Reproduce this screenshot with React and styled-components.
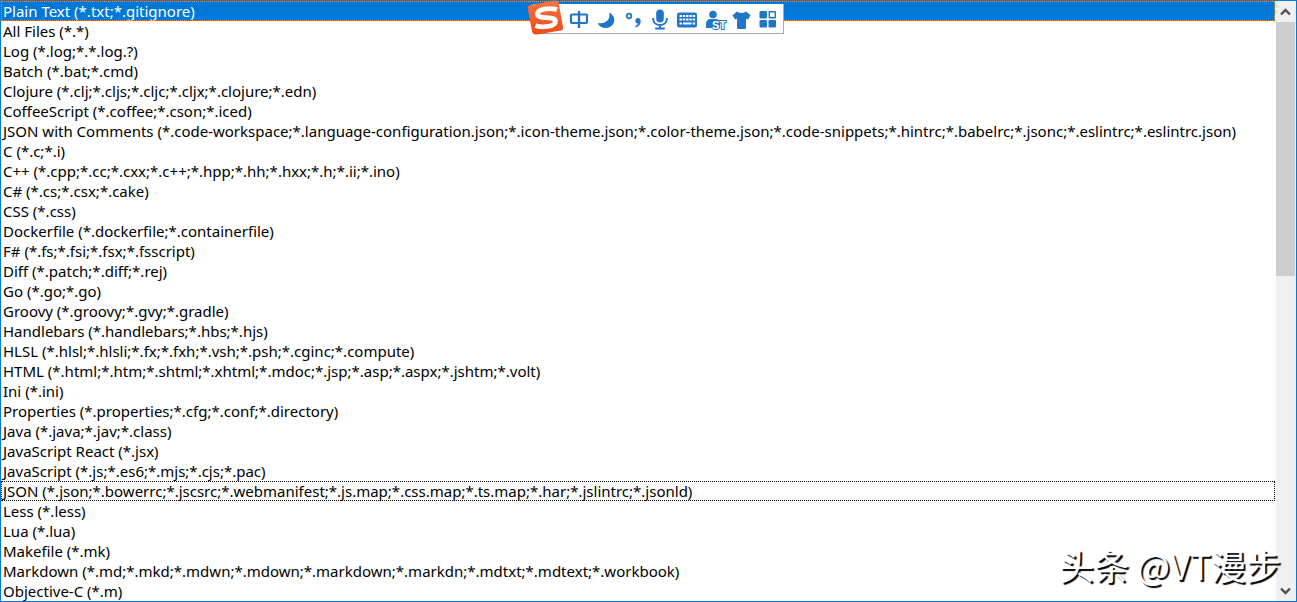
import React, { useState } from 'react';
import styled, { createGlobalStyle } from 'styled-components'

const GlobalStyle = createGlobalStyle`
  body {
    margin: 0;
    background-color: white;
  }
`

const fileTypes = [
  "Plain Text (*.txt;*.gitignore)",
  "All Files (*.*)",
  "Log (*.log;*.*.log.?)",
  "Batch (*.bat;*.cmd)",
  "Clojure (*.clj;*.cljs;*.cljc;*.cljx;*.clojure;*.edn)",
  "CoffeeScript (*.coffee;*.cson;*.iced)",
  "JSON with Comments (*.code-workspace;*.language-configuration.json;*.icon-theme.json;*.color-theme.json;*.code-snippets;*.hintrc;*.babelrc;*.jsonc;*.eslintrc;*.eslintrc.json)",
  "C (*.c;*.i)",
  "C++ (*.cpp;*.cc;*.cxx;*.c++;*.hpp;*.hh;*.hxx;*.h;*.ii;*.ino)",
  "C# (*.cs;*.csx;*.cake)",
  "CSS (*.css)",
  "Dockerfile (*.dockerfile;*.containerfile)",
  "F# (*.fs;*.fsi;*.fsx;*.fsscript)",
  "Diff (*.patch;*.diff;*.rej)",
  "Go (*.go;*.go)",
  "Groovy (*.groovy;*.gvy;*.gradle)",
  "Handlebars (*.handlebars;*.hbs;*.hjs)",
  "HLSL (*.hlsl;*.hlsli;*.fx;*.fxh;*.vsh;*.psh;*.cginc;*.compute)",
  "HTML (*.html;*.htm;*.shtml;*.xhtml;*.mdoc;*.jsp;*.asp;*.aspx;*.jshtm;*.volt)",
  "Ini (*.ini)",
  "Properties (*.properties;*.cfg;*.conf;*.directory)",
  "Java (*.java;*.jav;*.class)",
  "JavaScript React (*.jsx)",
  "JavaScript (*.js;*.es6;*.mjs;*.cjs;*.pac)",
  "JSON (*.json;*.bowerrc;*.jscsrc;*.webmanifest;*.js.map;*.css.map;*.ts.map;*.har;*.jslintrc;*.jsonld)",
  "Less (*.less)",
  "Lua (*.lua)",
  "Makefile (*.mk)",
  "Markdown (*.md;*.mkd;*.mdwn;*.mdown;*.markdown;*.markdn;*.mdtxt;*.mdtext;*.workbook)",
  "Objective-C (*.m)",
]

const DropDown = styled.div`
  position: relative;
  display: grid;
  grid-template-columns: minmax(0, 1fr) 20px;

  border: 1px solid #0078d7;
`

const FileTypeList = styled.select`
  width: 100%;
  padding: 0 1px 0 0;

  border: 0;
  border-radius: 0;
  outline: none;
  overflow: hidden;

  background-color: white;
  font-family: "Noto Sans", "Open Sans", sans-serif;
  font-size: 15px;
`

const FileType = styled.option`
  box-sizing: border-box;
  height: 20px;
  min-height: 20px;
  padding: 0 2px;

  line-height: 20px;
  white-space: nowrap;
  color: black;

  outline: ${props => props.$focused ? "1px dotted black" : "none"};
  outline-offset: -1px;

  &:checked {
    background: linear-gradient(#0078d7, #0078d7);
    -webkit-text-fill-color: white;
    outline: 1px dotted #ff8728;
  }
`

const ScrollBar = styled.div`
  display: flex;
  flex-direction: column;
  padding-right: 1px;

  background-color: #f0f0f0;
`

const ScrollButton = styled.button`
  display: grid;
  place-items: center;
  height: 21px;
  padding: 0;

  border: 0;
  background-color: #f0f0f0;
`

const ScrollTrack = styled.div`
  flex: 1;
`

const ScrollThumb = styled.div`
  height: 254px;

  background-color: #cdcdcd;
`

const InputBar = styled.div`
  position: absolute;
  top: 3px;
  left: 532px;
  display: flex;
  align-items: center;
  height: 29px;
  padding: 0 2px 0 32px;

  border-right: 1px solid #a8a8b0;
  border-bottom: 1px solid #a8a8b0;
  background-color: white;
`

const InputButton = styled.button`
  width: 27px;
  height: 27px;
  padding: 0;

  border: 0;
  background: none;
  color: #2175c7;

  svg {
    display: block;
    margin: auto;
    overflow: visible;
  }
`

const BadgeText = styled.text`
  fill: white;
  stroke: currentColor;
  stroke-width: 2px;
  paint-order: stroke;
  font-family: "Liberation Sans", sans-serif;
  font-size: 11px;
  font-weight: bold;
`

const Logo = styled.svg`
  position: absolute;
  top: -4px;
  left: -6px;
`

const Watermark = styled.div`
  position: absolute;
  right: 15px;
  bottom: 12px;

  color: white;
  font-family: "Noto Sans CJK SC", sans-serif;
  font-size: 35px;
  line-height: 48px;
  text-shadow: 2px 2px 1px black;
  pointer-events: none;
`

function Icon({children}) {
  return (
    <svg width="22" height="22" viewBox="0 0 22 22" fill="currentColor" aria-hidden="true">
      {children}
    </svg>
  )
}

function Chevron({up}) {
  return (
    <svg width="11" height="8" viewBox="0 0 11 8" fill="none" stroke="#505050" strokeWidth="2.4" aria-hidden="true">
      <path d={up ? "M1 6.5 5.5 2 10 6.5" : "M1 1.5 5.5 6 10 1.5"} />
    </svg>
  )
}

function App() {
  const [fileType, setFileType] = useState(fileTypes[0]);

  function handleChange(event) {
    setFileType(event.target.value)
  }

  return (
    <DropDown>
      <GlobalStyle />
      <FileTypeList aria-label="File type" size={fileTypes.length} value={fileType} onChange={handleChange}>
        {fileTypes.map(name => (
          <FileType key={name} value={name} $focused={name.startsWith("JSON (")}>{name}</FileType>
        ))}
      </FileTypeList>

      <ScrollBar>
        <ScrollButton aria-label="Scroll up"><Chevron up /></ScrollButton>
        <ScrollTrack><ScrollThumb /></ScrollTrack>
        <ScrollButton aria-label="Scroll down"><Chevron /></ScrollButton>
      </ScrollBar>

      <InputBar>
        <Logo width="38" height="36" viewBox="0 0 38 36" aria-hidden="true">
          <defs>
            <linearGradient id="logoFill" x1="0" y1="0" x2="0" y2="1">
              <stop offset="0" stopColor="#f77443" />
              <stop offset="1" stopColor="#ee4a12" />
            </linearGradient>
          </defs>
          <path d="M3 5 28 .5q3-.5 3.8 3L36 27q.5 3-2.5 3.600L10 34.500q-4 .5-5-3L.8 9q-.6-3 2.200-4Z" fill="url(#logoFill)" />
          <path d="M30 9.500C22 7.500 10 9 10.500 14.500c.5 5 17.500 1 18 6.500C28.500 27 15 28 8.500 25.500" fill="none" stroke="white" strokeWidth="4.8" />
        </Logo>
        <InputButton aria-label="Chinese">
          <Icon>
            <rect x="3" y="6.5" width="16" height="8.5" rx="1" fill="none" stroke="currentColor" strokeWidth="2.2" />
            <path d="M11 3v17" stroke="currentColor" strokeWidth="2.4" />
          </Icon>
        </InputButton>
        <InputButton aria-label="Half width">
          <Icon><path d="M14 4.500C19.500 7 21 13 17.500 17 13.500 21.500 5.500 21 2.500 15 9.500 16.500 16.500 12 14 4.500Z" /></Icon>
        </InputButton>
        <InputButton aria-label="Punctuation">
          <Icon>
            <circle cx="7" cy="8" r="2.3" fill="none" stroke="currentColor" strokeWidth="1.7" />
            <path d="M16 10c4 0 4 8-2.500 9.500v-1.600c1.600-.7 2.200-1.500 2.300-2.400C12.500 15.500 12.500 10 16 10Z" />
          </Icon>
        </InputButton>
        <InputButton aria-label="Voice">
          <Icon>
            <rect x="7.2" y="1.5" width="7.6" height="13" rx="3.8" />
            <path d="M4.200 10v1c0 8 13.600 8 13.600 0v-1M11 17v4M6.200 20.500h9.600" fill="none" stroke="currentColor" strokeWidth="2" />
          </Icon>
        </InputButton>
        <InputButton aria-label="Keyboard">
          <Icon>
            <rect x="1" y="4.5" width="20" height="15" rx="2.5" />
            <path d="M3.500 8h15.600M3.500 11.500h15.600" stroke="white" strokeWidth="2" strokeDasharray="2.4 .9" />
            <path d="M3.500 15.500h2.400M7 15.500h8.500M16.700 15.500h2.400" stroke="white" strokeWidth="2" />
          </Icon>
        </InputButton>
        <InputButton aria-label="Account">
          <Icon>
            <circle cx="10" cy="6.5" r="3.8" />
            <path d="M3 20v-4q0-5 5-5h4.500q4 0 4.500 3v6Z" />
            <BadgeText x="9" y="21">ST</BadgeText>
          </Icon>
        </InputButton>
        <InputButton aria-label="Skin">
          <Icon><path d="M7 3.500q4.500 3 9 0l4.500 3.800-2.500 4.200-2-.8V19.500q0 1.500-1.500 1.500H8.500q-1.500 0-1.500-1.500V10.700l-2 .8L2.500 7.300Z" /></Icon>
        </InputButton>
        <InputButton aria-label="Toolbox">
          <Icon>
            <rect x="2.5" y="3" width="7.5" height="7.5" rx="1" />
            <rect x="2.5" y="12" width="7.5" height="7.5" rx="1" />
            <rect x="11.5" y="12" width="7.5" height="7.5" rx="1" />
            <rect x="12.3" y="3.8" width="6" height="6" rx=".5" fill="none" stroke="currentColor" strokeWidth="1.5" />
          </Icon>
        </InputButton>
      </InputBar>

      <Watermark>头条 @VT漫步</Watermark>
    </DropDown>
  );
}

export default App;
